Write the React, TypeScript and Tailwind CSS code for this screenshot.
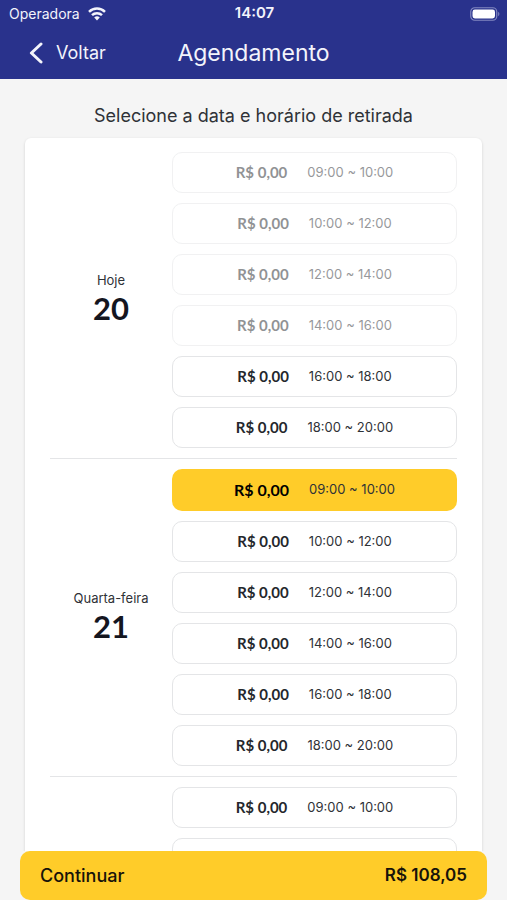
import React, { useState } from "react";
import clsx from "clsx";

type Slot = {
    time: string;
    disabled?: boolean;
};

type Day = {
    label: string;
    day: string;
    slots: Slot[];
};

const days: Day[] = [
    {
        label: "Hoje",
        day: "20",
        slots: [
            { time: "09:00 ~ 10:00", disabled: true },
            { time: "10:00 ~ 12:00", disabled: true },
            { time: "12:00 ~ 14:00", disabled: true },
            { time: "14:00 ~ 16:00", disabled: true },
            { time: "16:00 ~ 18:00" },
            { time: "18:00 ~ 20:00" },
        ],
    },
    {
        label: "Quarta-feira",
        day: "21",
        slots: [
            { time: "09:00 ~ 10:00" },
            { time: "10:00 ~ 12:00" },
            { time: "12:00 ~ 14:00" },
            { time: "14:00 ~ 16:00" },
            { time: "16:00 ~ 18:00" },
            { time: "18:00 ~ 20:00" },
        ],
    },
    {
        label: "Quinta-feira",
        day: "22",
        slots: [
            { time: "09:00 ~ 10:00" },
            { time: "10:00 ~ 12:00" },
            { time: "12:00 ~ 14:00" },
            { time: "14:00 ~ 16:00" },
            { time: "16:00 ~ 18:00" },
            { time: "18:00 ~ 20:00" },
        ],
    },
];

function WifiIcon() {
    return (
        <svg viewBox="0 0 18 14" className="w-[18px] h-[14px]" fill="none" stroke="currentColor" strokeWidth="2.5">
            <path d="M1 4.8a11.6 11.6 0 0 1 16 0" />
            <path d="M4 8.2a7.2 7.2 0 0 1 10 0" />
            <path d="M9 13.4 6.2 10.6a4 4 0 0 1 5.6 0Z" fill="currentColor" stroke="none" />
        </svg>
    );
}

function BatteryIcon() {
    return (
        <svg viewBox="0 0 30 14" className="w-[30px] h-[14px]" fill="none">
            <rect x="0.75" y="0.75" width="26" height="12.5" rx="4" stroke="#8288c0" strokeWidth="1.2" />
            <rect x="2.5" y="2.5" width="22.5" height="9" rx="2.4" fill="#fff" />
            <path d="M28.2 4.8c1.6.7 1.6 3.7 0 4.4Z" fill="#8288c0" />
        </svg>
    );
}

function BackIcon() {
    return (
        <svg
            viewBox="0 0 14 22"
            className="w-[14px] h-[22px]"
            fill="none"
            stroke="currentColor"
            strokeWidth="3"
            strokeLinecap="round"
            strokeLinejoin="round"
        >
            <path d="M12 2 2.4 11l9.6 9" />
        </svg>
    );
}

type SlotButtonProps = {
    slot: Slot;
    selected: boolean;
    onSelect: () => void;
};

function SlotButton({ slot, selected, onSelect }: SlotButtonProps) {
    return (
        <button
            type="button"
            disabled={slot.disabled}
            aria-pressed={selected}
            onClick={onSelect}
            className={clsx(
                "flex w-full items-center justify-center gap-5 rounded-[10px]",
                selected
                    ? "h-[42px] bg-[#ffcc29]"
                    : "h-[41px] border border-[#e4e5e7] bg-white",
                slot.disabled && "opacity-50",
            )}
        >
            <span
                className={clsx(
                    "font-['Lato',sans-serif] font-bold",
                    selected ? "text-base text-black" : "text-[15px] text-[#24272c]",
                )}
            >
                R$ 0,00
            </span>
            <span className="text-[13px] text-[#2f3237]">{slot.time}</span>
        </button>
    );
}

export default function App() {
    const [selected, setSelected] = useState("21-09:00 ~ 10:00");

    return (
        <div className="flex h-screen flex-col bg-[#f5f5f5] font-['Inter',sans-serif] text-[#2f3237]">
            <header className="shrink-0 bg-[#29328c] text-[#f3f4fb]">
                {/* Status bar */}
                <div className="grid h-[27px] grid-cols-[1fr_auto_1fr] items-center pl-[9px] pr-[7px]">
                    <div className="flex items-center gap-2 text-sm">
                        <span>Operadora</span>
                        <WifiIcon />
                    </div>
                    <span className="text-[15px] font-semibold">14:07</span>
                    <div className="flex justify-end">
                        <BatteryIcon />
                    </div>
                </div>

                {/* Navigation */}
                <div className="grid h-[52px] grid-cols-[1fr_auto_1fr] items-center px-[29px]">
                    <button type="button" className="flex items-center gap-[13px] text-lg">
                        <BackIcon />
                        Voltar
                    </button>
                    <h1 className="text-[23px] leading-7">Agendamento</h1>
                </div>
            </header>

            <main className="min-h-0 flex-1 overflow-y-auto px-[25px] [scrollbar-width:none]">
                <h2 className="pb-[10px] pt-[25px] text-center text-lg leading-6">
                    Selecione a data e horário de retirada
                </h2>

                <div className="rounded-md bg-white px-[25px] pt-[14px] shadow-[0_1px_3px_rgba(0,0,0,0.15)]">
                    {days.map((item) => (
                        <section
                            key={item.day}
                            className="mb-[10px] flex items-center border-t border-[#e4e5e7] pt-[10px] first:border-t-0 first:pt-0"
                        >
                            <div className="w-[122px] shrink-0 pb-1 text-center">
                                <p className="text-[13px] leading-5">{item.label}</p>
                                <p className="font-['Lato',sans-serif] text-[31px] font-bold leading-9 text-[#14161f]">
                                    {item.day}
                                </p>
                            </div>
                            <div className="flex flex-1 flex-col gap-[10px]">
                                {item.slots.map((slot) => {
                                    const id = `${item.day}-${slot.time}`;

                                    return (
                                        <SlotButton
                                            key={id}
                                            slot={slot}
                                            selected={selected === id}
                                            onSelect={() => setSelected(id)}
                                        />
                                    );
                                })}
                            </div>
                        </section>
                    ))}
                </div>
            </main>

            <footer className="shrink-0 px-5">
                <button
                    type="button"
                    className="flex h-[49px] w-full items-center justify-between rounded-[10px] bg-[#ffcc29] px-5 text-[#17130a]"
                >
                    <span className="text-lg font-medium">Continuar</span>
                    <span className="text-[17px] font-semibold">R$ 108,05</span>
                </button>
            </footer>
        </div>
    );
}
